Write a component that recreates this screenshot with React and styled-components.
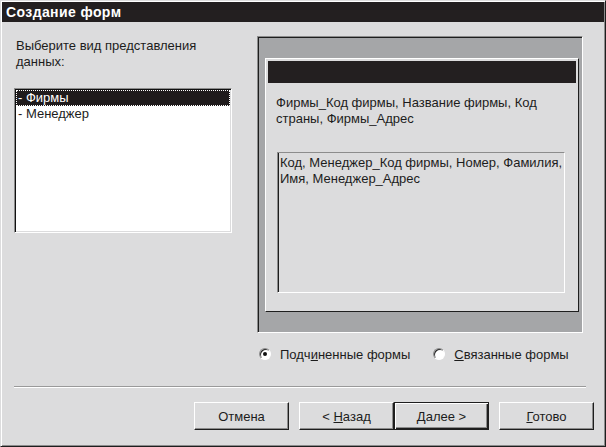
import React from "react";
import styled, { createGlobalStyle, css } from "styled-components";

const Global = createGlobalStyle`
  html, body { margin: 0; padding: 0; background: #dcdcdd; overflow: hidden; }
  body { font-family: "Liberation Sans", Arial, sans-serif; }
`;

const Window = styled.div`
  box-sizing: border-box;
  width: 606px;
  height: 447px;
  background: #dcdcdd;
  border: 1px solid;
  border-color: #dcdcdd #1e1e1e #1e1e1e #dcdcdd;
  box-shadow: inset 1px 1px 0 #fff, inset -1px -1px 0 #8c8c8c;
  padding: 1px;
  display: flex;
  flex-direction: column;
  font-size: 13px;
  color: #1c1c1c;
`;

const TitleBar = styled.div`
  height: 20px;
  flex: none;
  background: #231f20;
  color: #fff;
  font-weight: bold;
  font-size: 14px;
  display: flex;
  align-items: center;
  padding-left: 4px;
  letter-spacing: 0.4px;
`;

const Body = styled.div`
  flex: 1;
  display: flex;
  flex-direction: column;
  padding: 14px 10px 0 12px;
`;

const Top = styled.div`
  display: grid;
  grid-template-columns: 218px 326px;
  column-gap: 25px;
`;

const LeftCol = styled.div`
  display: flex;
  flex-direction: column;
  padding-top: 2px;
`;

const Prompt = styled.div`
  line-height: 16px;
  padding-left: 2px;
  width: 195px;
`;

const ListBox = styled.div`
  box-sizing: border-box;
  margin-top: 18px;
  height: 145px;
  background: #fff;
  border: 1px solid;
  border-color: #8c8c8c #fff #fff #8c8c8c;
  box-shadow: inset 1px 1px 0 #111, inset -1px -1px 0 #dcdcdd;
  padding: 1px;
`;

const ListItem = styled.div`
  height: 16px;
  line-height: 16px;
  padding-left: 2px;
  white-space: nowrap;
  ${(p) =>
    p.$selected &&
    css`
      background: #1f1b1c;
      color: #fff;
      outline: 1px dotted #fff;
      outline-offset: -1px;
    `}
`;

const RightCol = styled.div`
  display: flex;
  flex-direction: column;
`;

const Preview = styled.div`
  box-sizing: border-box;
  height: 297px;
  background: #a5a6a8;
  border: 1px solid;
  border-color: #8c8c8c #fff #fff #8c8c8c;
  box-shadow: inset 1px 1px 0 #1e1e1e;
  padding: 21px 3px 20px 7px;
  display: flex;
`;

const FormView = styled.div`
  flex: 1;
  background: #dcdcdd;
  border: 1px solid;
  border-color: #fff #1e1e1e #1e1e1e #fff;
  padding: 2px;
  display: flex;
  flex-direction: column;
`;

const FormCaption = styled.div`
  height: 22px;
  background: #231f20;
`;

const FormText = styled.div`
  margin: 12px 0 0 8px;
  line-height: 16px;
  width: 280px;
`;

const SubForm = styled.div`
  box-sizing: border-box;
  margin: 25px 0 0 9px;
  width: 288px;
  height: 141px;
  border: 1px solid;
  border-color: #8c8c8c #fff #fff #8c8c8c;
  box-shadow: inset 1px 0 0 #1e1e1e;
  padding: 2px 0 0 2px;
  line-height: 16px;
`;

const RadioRow = styled.div`
  margin-top: 13px;
  height: 16px;
  display: flex;
  align-items: center;
  padding-left: 2px;
  gap: 23px;
`;

const Option = styled.label`
  display: flex;
  align-items: center;
  white-space: nowrap;
`;

const Radio = styled.span`
  box-sizing: border-box;
  width: 12px;
  height: 12px;
  border-radius: 50%;
  background: #fff;
  border: 1px solid;
  border-color: #8c8c8c #fff #fff #8c8c8c;
  box-shadow: inset 1px 1px 0 #2a2a2a;
  display: flex;
  align-items: center;
  justify-content: center;
  margin-right: 9px;
  &::after {
    content: "";
    width: 4px;
    height: 4px;
    border-radius: 50%;
    background: ${(p) => (p.$checked ? "#111" : "transparent")};
  }
`;

const Separator = styled.div`
  margin: 24px 8px 0 0;
  border-top: 1px solid #9a9a9a;
  border-bottom: 1px solid #fff;
`;

const ButtonRow = styled.div`
  margin-top: 14px;
  display: flex;
  justify-content: flex-end;
  gap: 10px;
`;

const ButtonPair = styled.div`
  display: flex;
`;

const Button = styled.button`
  box-sizing: border-box;
  width: 95px;
  height: 28px;
  padding: 0;
  background: #dcdcdd;
  font-family: "Liberation Sans", Arial, sans-serif;
  font-size: 13px;
  color: #1c1c1c;
  border: 1px solid;
  border-color: #fff #1e1e1e #1e1e1e #fff;
  box-shadow: inset -1px -1px 0 #8c8c8c;
  ${(p) =>
    p.$default &&
    css`
      border-color: #1e1e1e;
      box-shadow: inset 1px 1px 0 #fff, inset -1px -1px 0 #1e1e1e, inset -2px -2px 0 #8c8c8c;
    `}
`;

export default function App() {
  return (
    <>
      <Global />
      <Window>
        <TitleBar>Создание форм</TitleBar>
        <Body>
          <Top>
            <LeftCol>
              <Prompt>Выберите вид представления данных:</Prompt>
              <ListBox>
                <ListItem $selected>- Фирмы</ListItem>
                <ListItem>- Менеджер</ListItem>
              </ListBox>
            </LeftCol>
            <RightCol>
              <Preview>
                <FormView>
                  <FormCaption />
                  <FormText>Фирмы_Код фирмы, Название фирмы, Код страны, Фирмы_Адрес</FormText>
                  <SubForm>
                    Код, Менеджер_Код фирмы, Номер, Фамилия,
                    <br />
                    Имя, Менеджер_Адрес
                  </SubForm>
                </FormView>
              </Preview>
              <RadioRow>
                <Option>
                  <Radio $checked />
                  Подч<u>и</u>ненные формы
                </Option>
                <Option>
                  <Radio />
                  <u>С</u>вязанные формы
                </Option>
              </RadioRow>
            </RightCol>
          </Top>
          <Separator />
          <ButtonRow>
            <Button>Отмена</Button>
            <ButtonPair>
              <Button>
                &lt; <u>Н</u>азад
              </Button>
              <Button $default>
                <u>Д</u>алее &gt;
              </Button>
            </ButtonPair>
            <Button>
              <u>Г</u>отово
            </Button>
          </ButtonRow>
        </Body>
      </Window>
    </>
  );
}
